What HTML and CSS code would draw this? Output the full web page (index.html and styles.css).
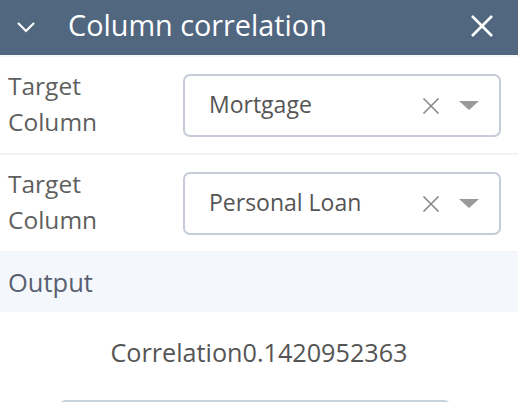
FILE: index.html
```html
<!DOCTYPE html>
<html>
<head>
<meta charset="utf-8">
<link rel="stylesheet" href="styles.css">
</head>
<body>
<div class="panel">
  <div class="header">
    <svg class="chev" width="20" height="12" viewBox="0 0 20 12"><path d="M2 2 L10 10 L18 2" fill="none" stroke="#fff" stroke-width="2.2"/></svg>
    <span class="title">Column correlation</span>
    <svg class="close" width="24" height="24" viewBox="0 0 24 24"><path d="M2 2 L22 22 M22 2 L2 22" fill="none" stroke="#fff" stroke-width="2.6"/></svg>
  </div>
  <div class="row">
    <div class="label">Target<br>Column</div>
    <div class="select">
      <span class="value">Mortgage</span>
      <svg class="clear" width="18" height="16" viewBox="0 0 18 16"><path d="M1.5 0.5 L16.5 15.5 M16.5 0.5 L1.5 15.5" fill="none" stroke="#8a8a8a" stroke-width="1.6"/></svg>
      <span class="arrow"></span>
    </div>
  </div>
  <div class="row">
    <div class="label">Target<br>Column</div>
    <div class="select">
      <span class="value">Personal Loan</span>
      <svg class="clear" width="18" height="16" viewBox="0 0 18 16"><path d="M1.5 0.5 L16.5 15.5 M16.5 0.5 L1.5 15.5" fill="none" stroke="#8a8a8a" stroke-width="1.6"/></svg>
      <span class="arrow"></span>
    </div>
  </div>
  <div class="section">Output</div>
  <div class="result">Correlation0.1420952363</div>
  <div class="bottom-box"></div>
</div>
</body>
</html>
```
FILE: styles.css
```css
* { box-sizing: border-box; }
html, body { margin: 0; padding: 0; background: #fff; }
body { font-family: "Open Sans", "Noto Sans", sans-serif; overflow: hidden; height: 402px; }
.panel { width: 518px; }
.header {
  height: 57px;
  background: #51667f;
  border-bottom: 2px solid #f6f6f6;
  display: flex;
  align-items: center;
  padding: 0 24px 0 16px;
  color: #fff;
}
.chev { margin-top: -1px; }
.title { font-size: 28.8px; margin-left: 32px; flex: 1; line-height: 1; margin-top: -4px; }
.close { margin-top: -3px; }
.row {
  height: 98px;
  display: flex;
  align-items: center;
  padding: 0 17px 0 8px;
  border-bottom: 2px solid #f3f3f3;
}
.row:last-of-type { border-bottom: none; }
.label {
  width: 175px;
  font-size: 24.5px;
  line-height: 36px;
  color: #5f5f5f;
  margin-top: -2px;
}
.select {
  flex: 1;
  height: 63px;
  border: 2px solid #c5ccd8;
  border-radius: 7px;
  display: flex;
  align-items: center;
  padding: 0 20px 0 24px;
}
.value { flex: 1; font-size: 23px; color: #555; margin-top: -3px; }
.clear { margin-right: 19px; margin-top: 2px; }
.arrow {
  width: 0; height: 0;
  border-left: 10px solid transparent;
  border-right: 10px solid transparent;
  border-top: 9px solid #9a9a9a;
  margin-top: 1px;
}
.section {
  height: 60px;
  background: #f4f8fd;
  font-size: 25.5px;
  color: #586070;
  display: flex;
  align-items: center;
  padding-left: 8px;
  margin-top: -1px;
}
.result {
  text-align: center;
  font-size: 25.2px;
  color: #555;
  padding-top: 23px;
  height: 88px;
}
.bottom-box {
  margin: 0 66px 0 58px;
  height: 30px;
  border: 2px solid #c8d3e0;
  border-radius: 8px;
}
```
